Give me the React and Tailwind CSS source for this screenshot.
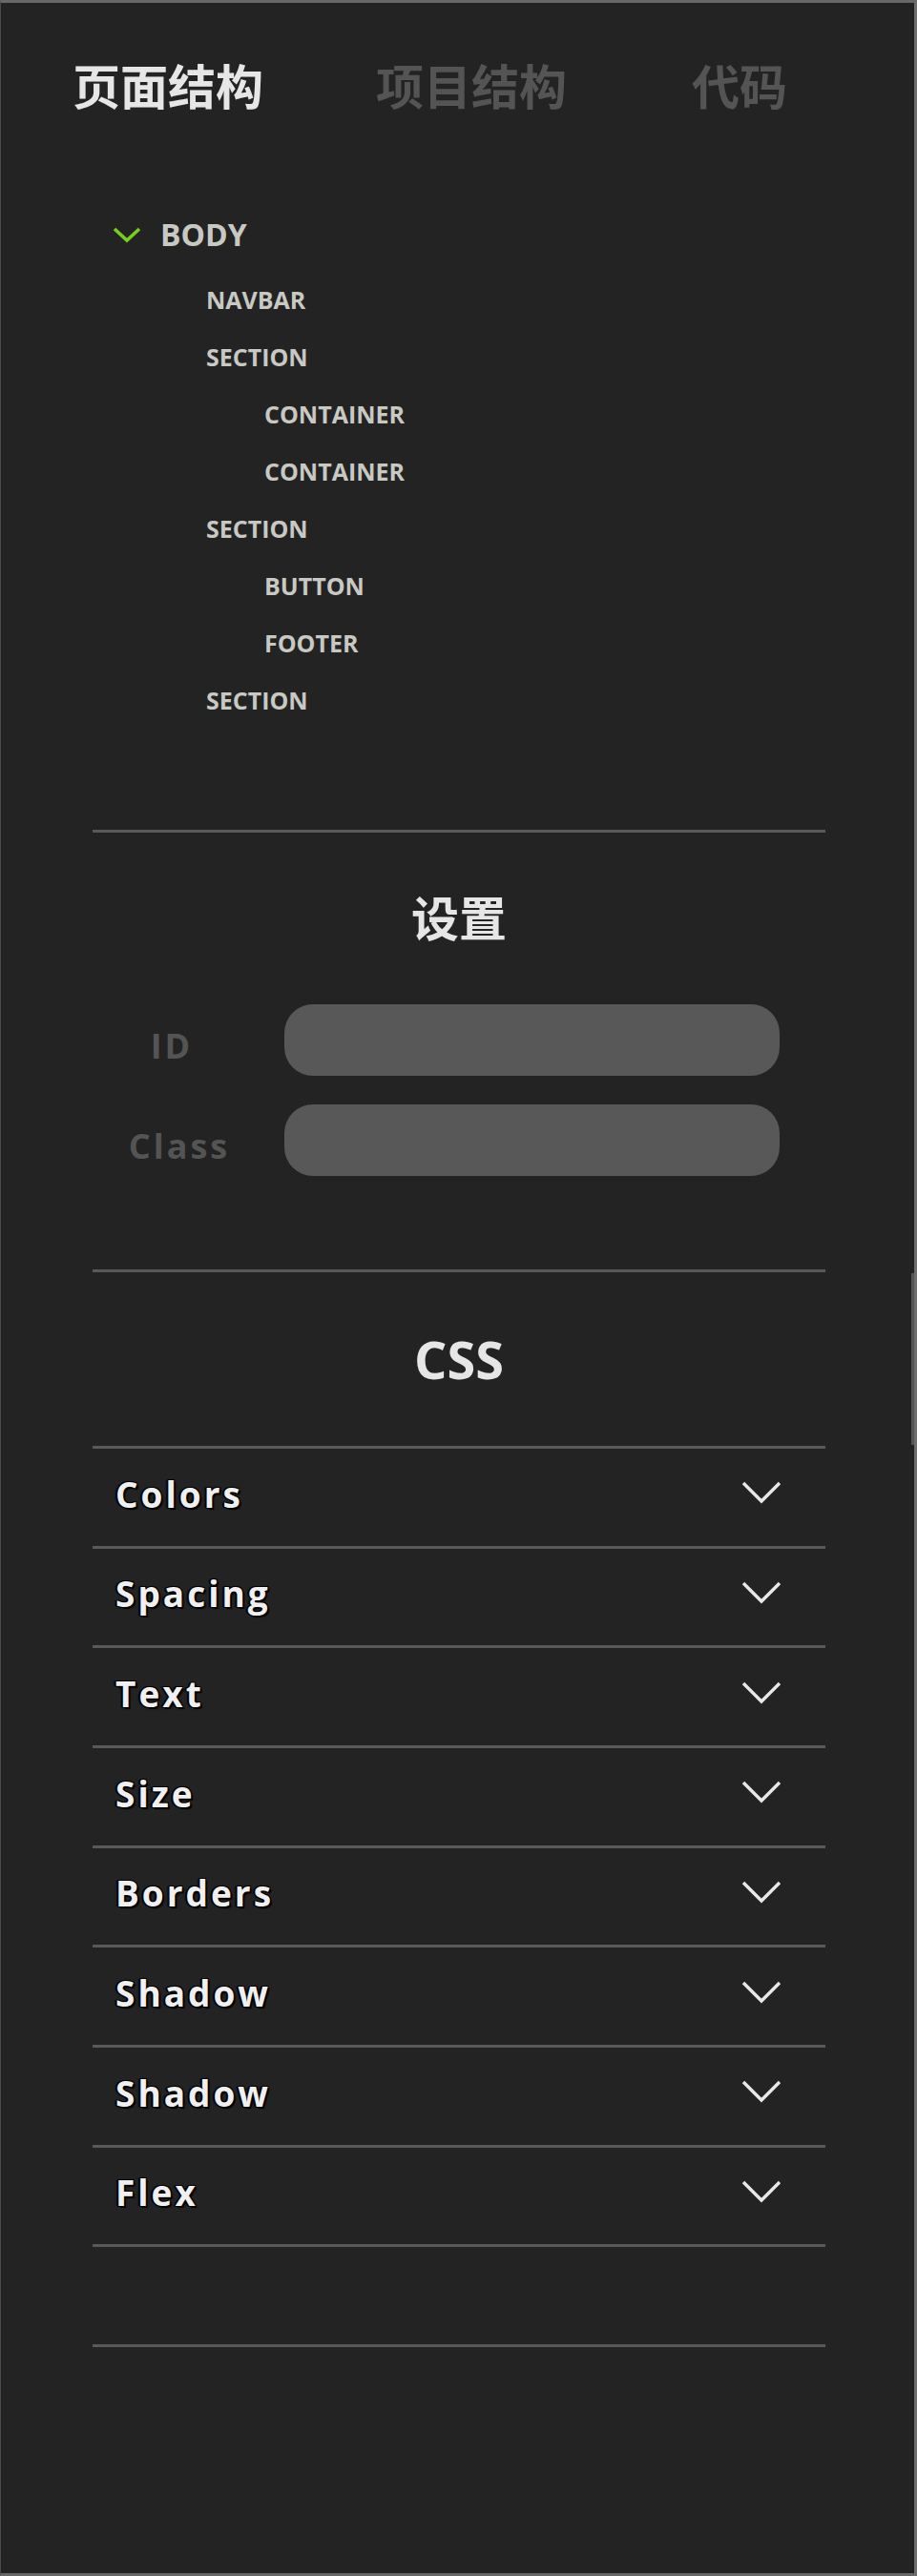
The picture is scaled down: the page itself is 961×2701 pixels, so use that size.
import React from 'react';

const tabs = [
  { label: '页面结构', active: true, className: '' },
  { label: '项目结构', active: false, className: 'ml-[118px]' },
  { label: '代码', active: false, className: 'ml-[131px]' },
];

const tree = [
  { label: 'NAVBAR', level: 1 },
  { label: 'SECTION', level: 1 },
  { label: 'CONTAINER', level: 2 },
  { label: 'CONTAINER', level: 2 },
  { label: 'SECTION', level: 1 },
  { label: 'BUTTON', level: 2 },
  { label: 'FOOTER', level: 2 },
  { label: 'SECTION', level: 1 },
];

const fields = [
  { label: 'ID', className: 'pr-[14px]' },
  { label: 'Class', className: 'pl-[2px]' },
];

const cssGroups = ['Colors', 'Spacing', 'Text', 'Size', 'Borders', 'Shadow', 'Shadow', 'Flex'];

const Chevron = ({ className = '' }) => (
  <svg width="42" height="26" viewBox="0 0 42 26" fill="none" className={className}>
    <path d="M2 3 L21 22 L40 3" stroke="#e8e8e8" strokeWidth="3.4" strokeLinecap="butt" strokeLinejoin="miter" />
  </svg>
);

const App = () => {
  return (
    <div className="relative h-[2701px] w-full overflow-hidden bg-[#232323] border-t-[3px] border-r-[3px] border-b-[3px] border-l border-t-[#686868] border-r-[#6e6e6e] border-b-[#686868] border-l-[#4a4a4a] font-['Open_Sans','Noto_Sans_CJK_SC',sans-serif]">
      {/* tabs */}
      <div className="flex pt-[60px] pl-[75px]">
        {tabs.map((t) => (
          <div
            key={t.label}
            className={`${t.className} text-[50px] leading-[50px] font-bold font-['Noto_Sans_CJK_SC',sans-serif] ${t.active ? 'text-[#e6e6e6]' : 'text-[#545454]'}`}
          >
            {t.label}
          </div>
        ))}
      </div>

      {/* tree */}
      <div className="mt-[94px]">
        <div className="flex h-[78px] items-center pl-[117px]">
          <svg width="30" height="18" viewBox="0 0 30 18" fill="none">
            <path d="M2 3 L15 15 L28 3" stroke="#76d01a" strokeWidth="3.6" />
          </svg>
          <span className="ml-[20px] text-[32px] font-bold leading-none text-[#c9c9c3]">BODY</span>
        </div>
        {tree.map((n, i) => (
          <div
            key={i}
            className={`flex h-[60px] items-center text-[25px] font-bold text-[#c9c9c3] ${n.level === 1 ? 'pl-[215px]' : 'pl-[276px]'}`}
          >
            {n.label}
          </div>
        ))}
      </div>

      {/* settings */}
      <div className="ml-[96px] w-[768px]">
        <div className="mt-[105px] h-[3px] bg-[#595959]" />
        <div className="mt-[62px] text-center text-[50px] leading-[50px] font-bold text-[#e6e6e6] font-['Noto_Sans_CJK_SC',sans-serif]">
          设置
        </div>

        <div className="mt-[68px] flex flex-col gap-[30px]">
          {fields.map((f) => (
            <div key={f.label} className="flex items-center">
              <div className={`mt-[12px] w-[180px] shrink-0 text-center text-[36px] font-bold leading-none tracking-[3px] text-[#545454] ${f.className}`}>
                {f.label}
              </div>
              <div className="ml-[21px] h-[75px] w-[519px] rounded-[30px] bg-[#585858]" />
            </div>
          ))}
        </div>

        <div className="mt-[98px] h-[3px] bg-[#595959]" />

        <div className="flex h-[182px] items-center justify-center text-[54px] font-bold leading-none text-[#e6e6e6]">
          CSS
        </div>

        {/* css accordion */}
        <div>
          {cssGroups.map((g, i) => (
            <div
              key={i}
              className="flex h-[104.67px] items-center justify-between border-t-[3px] border-[#595959] pb-[7px] pl-[24px] pr-[46px]"
            >
              <span className="text-[37px] font-bold leading-none tracking-[3px] text-[#f0f0f0] [text-shadow:-1px_-1px_0_#000,1px_-1px_0_#000,-1px_1px_0_#000,1px_1px_0_#000,2px_2px_1px_#000,-2px_0_1px_#000]">
                {g}
              </span>
              <Chevron className="-mt-[2px]" />
            </div>
          ))}
          <div className="h-[107.67px] border-t-[3px] border-b-[3px] border-[#595959]" />
        </div>
      </div>

      {/* scroll indicator */}
      <div className="absolute right-0 top-[1332px] h-[180px] w-[3px] bg-[#555555]" />
    </div>
  );
};

export default App;
